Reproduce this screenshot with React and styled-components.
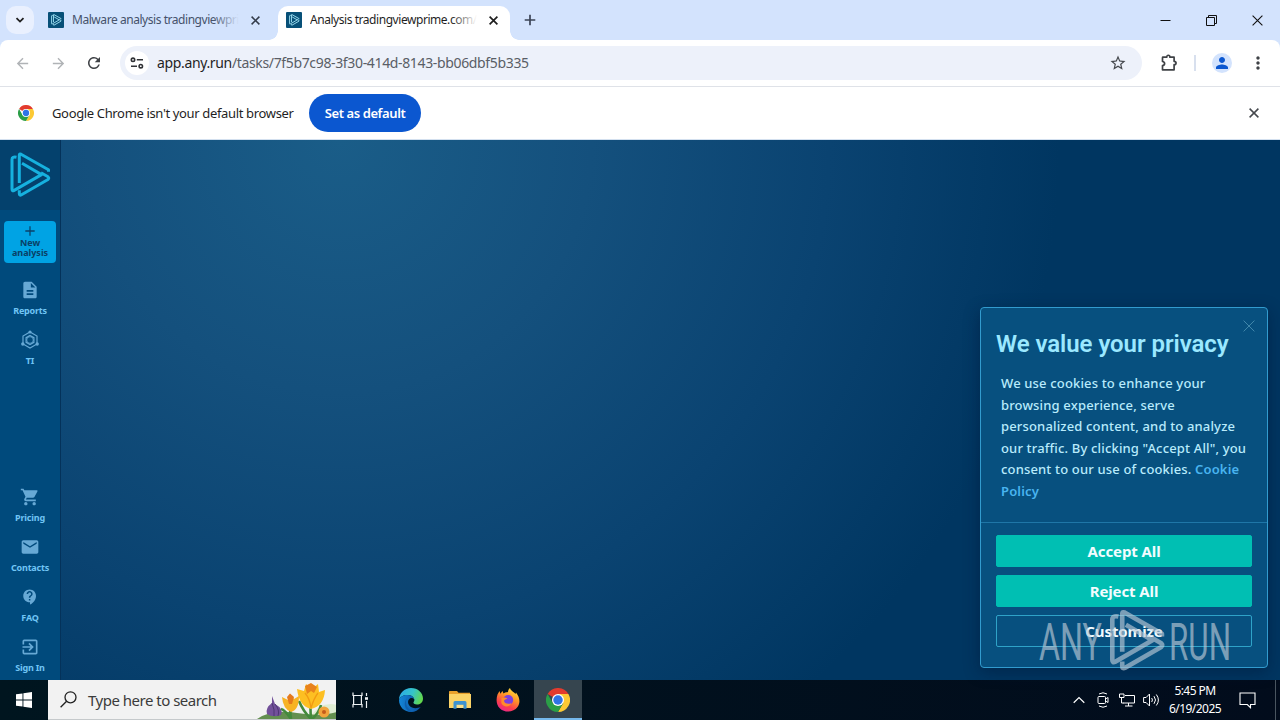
import styled, { createGlobalStyle } from 'styled-components';
import {
  MdDescription, MdShoppingCart, MdEmail, MdContactSupport, MdExitToApp,
  MdArrowBack, MdArrowForward, MdRefresh, MdStarBorder, MdMoreVert, MdPerson,
} from 'react-icons/md';

export default function App() {
  return (
    <Desktop>
      <GlobalStyle />
      <TabStrip>
        <TabSearch>
          <svg width="10" height="10" viewBox="0 0 10 10"><path d="M1.5 3.2 5 6.6 8.500 3.2" fill="none" stroke="#1f1f1f" strokeWidth="1.8" /></svg>
        </TabSearch>
        <Tab $width={230}>
          <Favicon />
          <TabTitle $fade="#d3e3fd" $color="#45526b">Malware analysis tradingviewpri</TabTitle>
          <Cross size={9} color="#333b4a" width={1.5} />
        </Tab>
        <Tab $width={232} $active>
          <Favicon />
          <TabTitle $fade="#fff" $color="#1f1f1f">Analysis tradingviewprime.com/</TabTitle>
          <Cross size={9} color="#1f1f1f" width={1.7} />
        </Tab>
        <NewTab>
          <svg width="12" height="12" viewBox="0 0 12 12"><path d="M6 .7v10.600M.7 6h10.600" stroke="#3b4456" strokeWidth="1.7" /></svg>
        </NewTab>
        <WindowButtons>
          <WindowButton><svg width="11" height="11" viewBox="0 0 11 11"><path d="M.5 5.500h10" stroke="#111" /></svg></WindowButton>
          <WindowButton><svg width="11" height="11" viewBox="0 0 11 11"><path d="M.5 2.500h8v8h-8zM2.500 2.500v-2h8v8h-2" fill="none" stroke="#111" /></svg></WindowButton>
          <WindowButton><Cross size={11} color="#111" width={1.1} /></WindowButton>
        </WindowButtons>
      </TabStrip>

      <ToolbarBack>
        <Toolbar>
          <NavButton $color="#b0b3b6"><MdArrowBack size={17} /></NavButton>
          <NavButton $color="#b0b3b6"><MdArrowForward size={17} /></NavButton>
          <NavButton $color="#3f4246"><MdRefresh size={18} /></NavButton>
          <Omnibox>
            <SiteInfo>
              <svg width="14" height="12" viewBox="0 0 14 12" fill="none" stroke="#303236" strokeWidth="1.6">
                <circle cx="3" cy="2.800" r="1.700" /><path d="M6.800 2.800H13M1 9.200h6" /><circle cx="10.800" cy="9.200" r="1.700" />
              </svg>
            </SiteInfo>
            <Url>app.any.run<Path>/tasks/7f5b7c98-3f30-414d-8143-bb06dbf5b335</Path></Url>
            <MdStarBorder size={18} color="#45484d" />
          </Omnibox>
          <ToolbarEnd>
            <svg width="18" height="18" viewBox="0 0 18 18">
              <path d="M3 3.200h3.700c0-2.600 3.200-2.600 3.200 0h4.200v4.100c2.600 0 2.600 3.400 0 3.400v5.100H2.500v-4.100c2.800-.3 2.800-3.900 0-4.200V3.700q0-.5.500-.5Z" fill="none" stroke="#3f4246" strokeWidth="1.700" strokeLinejoin="round" />
            </svg>
            <Separator />
            <Avatar><MdPerson size={18} /></Avatar>
            <MdMoreVert size={20} color="#3f4246" />
          </ToolbarEnd>
        </Toolbar>
      </ToolbarBack>

      <InfoBar>
        <ChromeLogo size={16} />
        <InfoText>Google Chrome isn't your default browser</InfoText>
        <DefaultButton>Set as default</DefaultButton>
        <InfoClose><Cross size={10} color="#45484d" width={1.5} /></InfoClose>
      </InfoBar>

      <Page>
        <Sidebar>
          <LogoBox><RunLogo size={46} color="#16b1df" /></LogoBox>
          <NewAnalysis>
            <svg width="10" height="10" viewBox="0 0 10 10"><path d="M5 .3v9.400M.3 5h9.400" stroke="#0a426a" strokeWidth="1.300" /></svg>
            <NewLabel>New<br />analysis</NewLabel>
          </NewAnalysis>
          <SideGroup>
            <SideItem><MdDescription size={20} /><SideLabel>Reports</SideLabel></SideItem>
            <SideItem><HexIcon /><SideLabel>TI</SideLabel></SideItem>
          </SideGroup>
          <SideGroup $bottom>
            <SideItem><MdShoppingCart size={20} /><SideLabel>Pricing</SideLabel></SideItem>
            <SideItem><MdEmail size={20} /><SideLabel>Contacts</SideLabel></SideItem>
            <SideItem><MdContactSupport size={18} /><SideLabel>FAQ</SideLabel></SideItem>
            <SideItem><MdExitToApp size={20} /><SideLabel>Sign In</SideLabel></SideItem>
          </SideGroup>
        </Sidebar>

        <Consent>
          <ConsentClose><Cross size={12} color="#4187ab" width={1} /></ConsentClose>
          <ConsentBody>
            <ConsentTitle>We value your privacy</ConsentTitle>
            <ConsentText>
              We use cookies to enhance your<br />
              browsing experience, serve<br />
              personalized content, and to analyze<br />
              our traffic. By clicking "Accept All", you<br />
              consent to our use of cookies. <PolicyLink>Cookie<br />Policy</PolicyLink>
            </ConsentText>
          </ConsentBody>
          <ConsentActions>
            <ConsentButton>Accept All</ConsentButton>
            <ConsentButton>Reject All</ConsentButton>
            <ConsentButton $outline>Customize</ConsentButton>
          </ConsentActions>
        </Consent>
        <Watermark>
          <svg width="204" height="70" viewBox="0 0 204 70" fill="#b9c9d6" fontFamily="Roboto, sans-serif" fontWeight="400" fontSize="52">
            <text x="2" y="51.500" textLength="63" lengthAdjust="spacingAndGlyphs">ANY</text>
            <text x="132" y="51.500" textLength="62" lengthAdjust="spacingAndGlyphs">RUN</text>
            <g transform="translate(68.500 1.500) scale(1.36)"><LogoStrokes color="#b9c9d6" width={3.4} /></g>
          </svg>
        </Watermark>
      </Page>

      <Taskbar>
        <StartButton>
          <svg width="16" height="16" viewBox="0 0 16 16" fill="#fff"><path d="M0 2.300 6.500 1.400v6.100H0zM7.400 1.250 16 0v7.500H7.400zM0 8.400h6.500v6.200L0 13.700zM7.400 8.400H16V16l-8.600-1.200z" /></svg>
        </StartButton>
        <SearchBox>
          <svg width="17" height="17" viewBox="0 0 17 17" fill="none" stroke="#222" strokeWidth="1.300"><circle cx="10.500" cy="6.300" r="5.500" /><path d="M6.600 10.200.6 16.200" /></svg>
          <SearchText>Type here to search</SearchText>
          <Flowers />
        </SearchBox>
        <TaskButton>
          <svg width="18" height="18" viewBox="0 0 18 18" fill="none" stroke="#eef2f4" strokeWidth="1.200"><path d="M2 1.500v3h9v-3M2 16.500v-3h9v3M2.600 4.500v9M10.400 4.500v9M15.500 2v3M15.500 10v7" /><path d="M14 6.200h3v2.600h-3z" fill="#eef2f4" stroke="none" /></svg>
        </TaskButton>
        <TaskButton $width={54}><EdgeLogo /></TaskButton>
        <TaskButton $width={44}><FolderLogo /></TaskButton>
        <TaskButton $width={52}><FirefoxLogo /></TaskButton>
        <TaskButton $active><ChromeLogo size={24} /></TaskButton>
        <Tray>
          <TrayIcon><svg width="12" height="8" viewBox="0 0 12 8"><path d="M.7 6.700 6 1.500l5.300 5.200" fill="none" stroke="#fff" strokeWidth="1.200" /></svg></TrayIcon>
          <TrayIcon><svg width="12" height="16" viewBox="0 0 12 16" fill="none" stroke="#fff"><rect x="1" y="4.500" width="7.500" height="7" rx="1" /><path d="M8.500 7l2.500-1.500v5L8.500 9M2 2Q6-.5 10 2M2 14q4 2.500 8 0" /></svg></TrayIcon>
          <TrayIcon><svg width="16" height="14" viewBox="0 0 16 14" fill="none" stroke="#fff"><path d="M6 2.500h9.500v7.500H4.500M9.500 10v3M6 13h7.500M.5 1h4.500v3.500H.5zM2.500 4.500V10H5" /></svg></TrayIcon>
          <TrayIcon><svg width="17" height="14" viewBox="0 0 17 14" fill="none" stroke="#fff"><path d="M.6 4.500h2.500L6.500 1v12L3.100 9.500H.6zM8.700 5q1.500 2 0 4M11 3.200q3 3.800 0 7.600M13.300 1.500q4.200 5.500 0 11" /></svg></TrayIcon>
        </Tray>
        <Clock><span>5:45 PM</span><span>6/19/2025</span></Clock>
        <Notice>
          <svg width="17" height="17" viewBox="0 0 17 17"><path d="M1 1h15v11.500h-4.500v3.200l-3.200-3.200H1z" fill="none" stroke="#fff" strokeWidth="1.100" /></svg>
        </Notice>
      </Taskbar>
    </Desktop>
  );
}

function Cross({ size, color, width }) {
  return (
    <svg width={size} height={size} viewBox={`0 0 ${size} ${size}`}>
      <path d={`M.6 .6 ${size - 0.6} ${size - 0.6}M${size - 0.6} .6 .6 ${size - 0.6}`} stroke={color} strokeWidth={width} />
    </svg>
  );
}

function LogoStrokes({ color, width = 3 }) {
  return (
    <g fill="none" stroke={color} strokeWidth={width} strokeLinejoin="round">
      <path d="M41.500 19.800V17.800L14 2.200Q12.300 1.500 12.300 3.200V31" />
      <path d="M9.500 5.200Q5 4.300 5 7.500V37Q5 39.600 7.200 38.400L34.500 22.600 15 11.300" />
      <path d="M12.300 38.200V41.500Q12.300 44 14.500 42.800L41 27.500Q42.500 26 41 24.800L34 20.800" />
    </g>
  );
}

function RunLogo({ size, color }) {
  return <svg width={size} height={size} viewBox="0 0 46 46"><LogoStrokes color={color} /></svg>;
}

function Favicon() {
  return (
    <svg width="16" height="16" viewBox="0 0 16 16">
      <rect width="16" height="16" rx="1" fill="#075078" />
      <g transform="translate(2.300 2) scale(.26)"><LogoStrokes color="#9fe0f2" width={3.6} /></g>
    </svg>
  );
}

function HexIcon() {
  return (
    <svg width="20" height="20" viewBox="0 0 20 20" fill="none" stroke="currentColor" strokeWidth="1.200">
      <path d="M10 2l7 4v8l-7 4-7-4V6z" /><path d="M10 5.500l3.900 2.200v4.600L10 14.500l-3.900-2.200V7.700z" /><circle cx="10" cy="10" r="3.300" strokeWidth=".8" />
      <g fill="currentColor" stroke="none"><circle cx="10" cy="2" r="1.600" /><circle cx="17.200" cy="14" r="1.700" /><circle cx="2.800" cy="14" r="1.700" /></g>
    </svg>
  );
}

function ChromeLogo({ size }) {
  return (
    <svg width={size} height={size} viewBox="0 0 48 48">
      <path d="M24 24 3.200 12A24 24 0 0 1 44.800 12z" fill="#e33b2e" />
      <path d="M24 12H44.800A24 24 0 0 1 24 48L34.400 30z" fill="#fcc934" />
      <path d="M13.600 30 3.200 12A24 24 0 0 0 24 48L34.400 30z" fill="#2b9e47" />
      <circle cx="24" cy="24" r="12" fill="#fff" />
      <circle cx="24" cy="24" r="9.500" fill="#2f74e6" />
    </svg>
  );
}

function EdgeLogo() {
  return (
    <svg width="24" height="24" viewBox="0 0 24 24">
      <defs>
        <linearGradient id="edgeTop" x1="0" x2="1" y1=".2" y2=".5"><stop offset="0" stopColor="#2ba8e8" /><stop offset=".55" stopColor="#35c4c9" /><stop offset="1" stopColor="#62d84d" /></linearGradient>
        <linearGradient id="edgeLow" x1="0" x2="1"><stop offset="0" stopColor="#1486d8" /><stop offset="1" stopColor="#0c4f9e" /></linearGradient>
      </defs>
      <path d="M0 12C0 5 5.500 0 12 0c7 0 12 5 12 10.500 0 4-3 6-6 6-2.500 0-4-1-3.500-2.200.8-1 1-2 .8-3C14.500 8.500 12 7 8.500 7 4 7 1 9 0 12Z" fill="url(#edgeTop)" />
      <path d="M0 12C1 9 4 7 8.500 7c3.500 0 6 1.500 6.800 4.300-1-1-2.300-1.500-3.500-1.300-2.800 1-3.600 4.500-1.500 7.500 2.500 3 7.500 3.500 11.500 1.200C19.500 22 16 24 12 24 5.500 24 0 19 0 12Z" fill="url(#edgeLow)" />
      <path d="M8.500 9.500C5.500 13 7 20.500 14 23.500c-1 .4-2 .5-3 .4C6 22 3.500 15 8.500 9.500Z" fill="#0e5fae" />
    </svg>
  );
}

function FolderLogo() {
  return (
    <svg width="22" height="20" viewBox="0 0 22 20">
      <path d="M0 1.500Q0 1 .8 1H8l1.500 1.800H21v4H0z" fill="#e9a12c" />
      <path d="M0 4h22v14H0z" fill="#fbd367" />
      <path d="M4.500 18.800v-6.300q0-1.500 1.500-1.500h10q1.500 0 1.500 1.500v6.300h-3v-4h-7v4z" fill="#3d93d2" />
      <path d="M8 15h6v3H8z" fill="#fbe08c" />
    </svg>
  );
}

function FirefoxLogo() {
  return (
    <svg width="24" height="24" viewBox="0 0 24 24">
      <defs>
        <linearGradient id="fox" x1=".8" y1="0" x2=".3" y2="1"><stop offset="0" stopColor="#ffe63e" /><stop offset=".4" stopColor="#ff9726" /><stop offset=".75" stopColor="#fb3d4d" /><stop offset="1" stopColor="#e9268c" /></linearGradient>
      </defs>
      <path d="M1.500 6.500 3.500 3l.8 2.800L6.500 3l1 2.500C9 4 11 4.300 12 4c0-1.500.8-3 2-4 .5 2.500 4 4 5.500 6L20 4.500c4 5 4.500 10.500 1.500 14.500-3.500 5-12 6.500-17.500 1.500C0 17 0 11 1.500 6.500Z" fill="url(#fox)" />
      <circle cx="12.200" cy="12" r="5" fill="#7a3fe0" />
      <path d="M5.500 10c2.500-1 4.500-.5 6 .6-1.500 1-3 1-3.500 2.200 0 2.700 4.500 4 7.500 2.200-1.500 4.500-8.500 4.500-10.200 0z" fill="#ff8a2c" />
    </svg>
  );
}

function Flowers() {
  return (
    <FlowerArt width="80" height="39" viewBox="-1 -1 80 39">
      <path d="M62 26q10-5 18-2v14H50z" fill="#dfecd2" />
      <path d="M0 38Q15 28 40 32T80 31V38z" fill="#638f4f" />
      <path d="M34 38Q28 29 24 28M34 38Q32 25 36 20M54 38Q46 30 42 20M54 38Q53 26 54 20M55 38Q62 32 64 24" stroke="#438a3c" strokeWidth="2.600" fill="none" />
      <path d="M15 15 18 23Q27 28 24 34 16 37 10 33 8 27 15 22Z" fill="#72509a" />
      <path d="M15 22Q18 29 17 35M18 23Q23 29 21 35" stroke="#4c3672" fill="none" />
      <path d="M25 16 31 19 33 13 37 18 42 15Q42 29 34 31 26 28 25 16Z" fill="#f7b324" />
      <path d="M30 16 33 12.500 37 16 35 23H32Z" fill="#e57a1c" />
      <path d="M40 8 47 10 49 3 55 8 61 3 62 11 68 9Q67 25 54 28 42 25 40 8Z" fill="#fdbf22" />
      <path d="M48 5 54 2 60 6 57 12 54 10 50 13Z" fill="#e8821c" />
      <path d="M48 12Q53 18 54 27M61 12Q57 17 54 27" stroke="#f29a12" strokeWidth="1.300" fill="none" />
      <circle cx="67" cy="31" r="5.500" fill="#f2a33c" /><circle cx="67" cy="31" r="2" fill="#c55b1b" />
    </FlowerArt>
  );
}

const GlobalStyle = createGlobalStyle`
  * { box-sizing: border-box; }
  body { margin: 0; overflow: hidden; }
  button { border: 0; padding: 0; background: none; font: inherit; color: inherit; }
  svg { display: block; flex: none; }
`;

const Desktop = styled.div`
  width: 1280px;
  height: 720px;
  display: flex;
  flex-direction: column;
  overflow: hidden;
  font-family: 'Noto Sans', 'Open Sans', sans-serif;
  white-space: nowrap;
`;

const TabStrip = styled.header`
  height: 40px;
  flex: none;
  display: flex;
  align-items: flex-end;
  background: #d3e3fd;
`;

const TabSearch = styled.button`
  width: 28px;
  height: 28px;
  margin: 0 6px 6px;
  border-radius: 10px;
  background: #e9f0fe;
  display: grid;
  place-items: center;
`;

const Tab = styled.div`
  position: relative;
  width: ${(p) => p.$width}px;
  height: 34px;
  margin-left: ${(p) => (p.$active ? 8 : 0)}px;
  padding: 0 ${(p) => (p.$active ? 12 : 10)}px 6px 8px;
  display: flex;
  align-items: center;
  gap: 8px;
  border-radius: 10px 10px 0 0;
  background: ${(p) => (p.$active ? '#fff' : 'transparent')};

  &::before,
  &::after {
    content: '';
    display: ${(p) => (p.$active ? 'block' : 'none')};
    position: absolute;
    bottom: 0;
    width: 9px;
    height: 9px;
  }
  &::before {
    left: -9px;
    background: radial-gradient(circle at 0 0, transparent 8.500px, #fff 9px);
  }
  &::after {
    right: -9px;
    background: radial-gradient(circle at 100% 0, transparent 8.500px, #fff 9px);
  }
`;

const TabTitle = styled.span`
  position: relative;
  flex: 1;
  overflow: hidden;
  margin-right: 4px;
  font-size: 12px;
  line-height: 18px;
  letter-spacing: -0.45px;
  color: ${(p) => p.$color};

  &::after {
    content: '';
    position: absolute;
    inset: 0 0 0 auto;
    width: 26px;
    background: linear-gradient(90deg, transparent, ${(p) => p.$fade});
  }
`;

const NewTab = styled.button`
  width: 40px;
  height: 40px;
  display: grid;
  place-items: center;
`;

const WindowButtons = styled.div`
  margin-left: auto;
  height: 40px;
  display: flex;
`;

const WindowButton = styled.button`
  width: 46px;
  height: 40px;
  display: grid;
  place-items: center;
`;

const ToolbarBack = styled.div`
  height: 47px;
  flex: none;
  background: #d3e3fd;
`;

const Toolbar = styled.div`
  height: 47px;
  padding: 0 12px 0 4px;
  display: flex;
  align-items: center;
  background: #fff;
  border-radius: 8px 8px 0 0;
  border-bottom: 1px solid #dfe2e8;
`;

const NavButton = styled.button`
  width: 36px;
  height: 36px;
  display: grid;
  place-items: center;
  color: ${(p) => p.$color};
`;

const Omnibox = styled.div`
  width: 1022px;
  height: 34px;
  margin-left: 8px;
  padding: 0 15px 0 5px;
  display: flex;
  align-items: center;
  border-radius: 17px;
  background: #edf1fa;
`;

const SiteInfo = styled.span`
  width: 24px;
  height: 24px;
  border-radius: 50%;
  background: #fff;
  display: grid;
  place-items: center;
`;

const Url = styled.span`
  flex: 1;
  margin-left: 8px;
  padding-bottom: 1px;
  font-size: 14px;
  letter-spacing: -0.35px;
  color: #1f1f1f;
`;

const Path = styled.span`
  color: #5a5e66;
`;

const ToolbarEnd = styled.div`
  flex: 1;
  display: flex;
  align-items: center;
  justify-content: flex-end;
`;

const Separator = styled.span`
  width: 2px;
  height: 16px;
  margin: 0 16px;
  background: #d8e0ee;
`;

const Avatar = styled.span`
  width: 20px;
  height: 20px;
  margin-right: 16px;
  border-radius: 50%;
  background: #d3e3fd;
  color: #0b57d0;
  display: grid;
  place-items: center;
`;

const InfoBar = styled.div`
  height: 53px;
  flex: none;
  padding: 0 21px 0 18px;
  display: flex;
  align-items: center;
  background: #fff;
  border-bottom: 1px solid #d3e0ef;
`;

const InfoText = styled.span`
  margin: 0 16px 0 18px;
  width: 241px;
  font-size: 13px;
  letter-spacing: -0.35px;
  color: #1f1f1f;
`;

const DefaultButton = styled.button`
  width: 112px;
  height: 38px;
  border-radius: 19px;
  background: #0b57d0;
  color: #fff;
  font-size: 13px;
  font-weight: 600;
  letter-spacing: -0.4px;
`;

const InfoClose = styled.button`
  margin-left: auto;
`;

const Page = styled.main`
  position: relative;
  flex: 1;
  display: flex;
  background: radial-gradient(ellipse 720px 720px at 340px 0, #1a5d88 0%, #14507d 35%, #0a4371 68%, #003661 100%);
`;

const Sidebar = styled.nav`
  width: 61px;
  display: flex;
  flex-direction: column;
  align-items: center;
  background: #004a7c;
  border-right: 1px solid #04325a;
  font-size: 9px;
  font-weight: 700;
  letter-spacing: -0.2px;
`;

const LogoBox = styled.div`
  align-self: stretch;
  height: 70px;
  display: grid;
  place-items: center;
  background: #04416d;
`;

const NewAnalysis = styled.button`
  width: 52px;
  height: 42px;
  margin: 11px 0 17px;
  display: flex;
  flex-direction: column;
  align-items: center;
  gap: 2px;
  padding-top: 5px;
  border-radius: 4px;
  background: #00a3e4;
  color: #0a3f66;
`;

const NewLabel = styled.span`
  line-height: 10px;
`;

const SideGroup = styled.div`
  margin-top: ${(p) => (p.$bottom ? 'auto' : 0)};
  margin-bottom: ${(p) => (p.$bottom ? -7 : 0)}px;
`;

const SideItem = styled.div`
  height: 50px;
  display: flex;
  flex-direction: column;
  align-items: center;
  color: #67a9d5;

  svg { height: 20px; }
`;

const SideLabel = styled.span`
  margin-top: 5px;
  line-height: 12px;
  color: #70c5f5;
`;

const Consent = styled.section`
  position: absolute;
  right: 12px;
  bottom: 12px;
  width: 288px;
  height: 361px;
  border: 1px solid #329bce;
  border-radius: 4px;
  background: #07507f;
  box-shadow: 0 4px 16px rgba(0, 20, 50, 0.45);
`;

const ConsentClose = styled.button`
  position: absolute;
  top: 12px;
  right: 12px;
`;

const ConsentBody = styled.div`
  height: 215px;
  padding: 20px 20px 0;
  border-bottom: 1px solid #1f76a7;
`;

const ConsentTitle = styled.h2`
  margin: 0 0 13px -5px;
  font: 600 24px/32px Roboto, sans-serif;
  letter-spacing: -0.05px;
  color: #9be8ff;
`;

const ConsentText = styled.p`
  margin: 0;
  font-size: 13px;
  font-weight: 500;
  line-height: 21.600px;
  letter-spacing: 0.16px;
  color: #b8ebfc;
`;

const PolicyLink = styled.a`
  color: #49b4f0;
  font-weight: 600;
`;

const ConsentActions = styled.div`
  padding: 12px 15px;
  display: flex;
  flex-direction: column;
  gap: 8px;
`;

const ConsentButton = styled.button`
  height: 32px;
  border-radius: 2px;
  border: 1px solid ${(p) => (p.$outline ? '#2fa3c8' : '#00bfb3')};
  background: ${(p) => (p.$outline ? 'transparent' : '#00bfb3')};
  color: #f2fcff;
  font-size: 15px;
  font-weight: 700;
  letter-spacing: -0.1px;
`;

const Watermark = styled.div`
  position: absolute;
  left: 1037px;
  top: 468px;
  opacity: 0.65;
`;

const Taskbar = styled.footer`
  height: 40px;
  flex: none;
  display: flex;
  background: linear-gradient(90deg, #00151f, #020c1c);
  color: #fff;
`;

const StartButton = styled.button`
  width: 48px;
  display: grid;
  place-items: center;
`;

const SearchBox = styled.div`
  width: 288px;
  padding-left: 12px;
  display: flex;
  align-items: center;
  background: #f2f2f2;
  border-bottom: 1px solid #c5c9cb;
  overflow: hidden;
`;

const SearchText = styled.span`
  width: 130px;
  margin-left: 11px;
  font-size: 15px;
  letter-spacing: -0.5px;
  color: #3b3b3b;
`;

const FlowerArt = styled.svg`
  margin-left: auto;
`;

const TaskButton = styled.button`
  width: ${(p) => p.$width || 48}px;
  display: grid;
  place-items: center;
  background: ${(p) => (p.$active ? '#36454f' : 'transparent')};
  box-shadow: ${(p) => (p.$active ? 'inset 0 -2px #76b9ed' : 'none')};
`;

const Tray = styled.div`
  margin-left: auto;
  display: flex;
`;

const TrayIcon = styled.span`
  width: 24px;
  display: grid;
  place-items: center;
`;

const Clock = styled.div`
  width: 64px;
  display: flex;
  flex-direction: column;
  align-items: center;
  justify-content: center;
  font-size: 12px;
  line-height: 18px;
  letter-spacing: -0.55px;
`;

const Notice = styled.div`
  width: 49px;
  display: grid;
  place-items: center;
  padding-right: 7px;
  border-right: 1px solid #4a5560;
  margin-right: 4px;
`;
